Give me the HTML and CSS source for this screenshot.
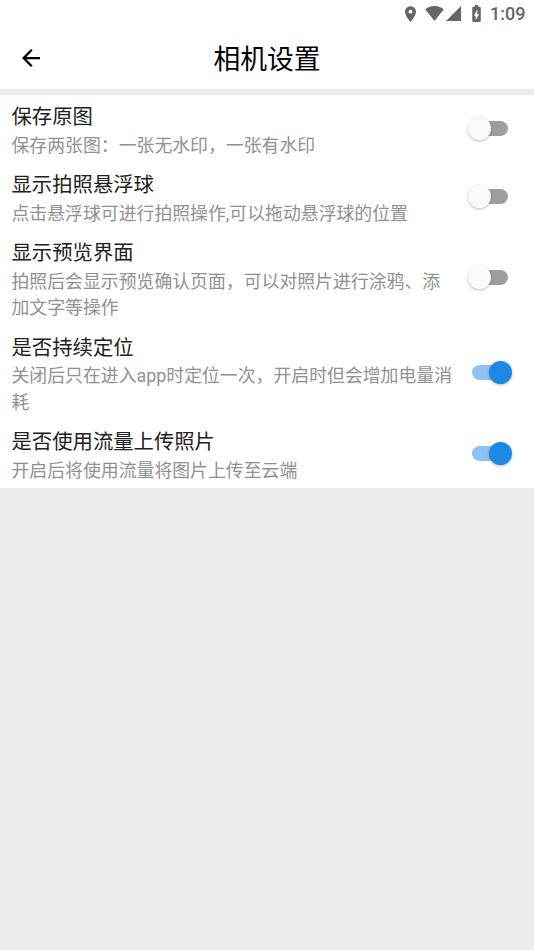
FILE: index.html
```html
<!DOCTYPE html>
<html lang="zh-CN">
<head>
<meta charset="utf-8">
<title>相机设置</title>
<link rel="stylesheet" href="styles.css">
</head>
<body>
<div class="status">
  <svg class="pin" viewBox="5 2 14 20"><path d="M12 2C8.13 2 5 5.13 5 9c0 5.25 7 13 7 13s7-7.75 7-13c0-3.87-3.13-7-7-7zm0 9.5a2.5 2.5 0 1 1 0-5 2.5 2.5 0 0 1 0 5z"/></svg>
  <svg class="wifi" viewBox="0 0 20 16"><path d="M0 3.5C6-1.200 14-1.200 20 3.500L10 16z"/></svg>
  <svg class="signal" viewBox="0 0 16 16"><path d="M16 0v16H0z"/></svg>
  <svg class="battery" viewBox="7 2 10 20"><path d="M15.670 4H14V2h-4v2H8.330C7.600 4 7 4.600 7 5.330v15.330C7 21.400 7.600 22 8.330 22h7.330c.740 0 1.340-.600 1.340-1.330V5.330C17 4.600 16.400 4 15.670 4zM11 20v-5.500H9L13 7v5.500h2L11 20z"/></svg>
  <span class="clock">1:09</span>
</div>
<header class="bar">
  <svg class="back" viewBox="4 4 16 16"><path d="M20 11H7.830l5.590-5.590L12 4l-8 8 8 8 1.410-1.410L7.830 13H20v-2z"/></svg>
  <h1>相机设置</h1>
</header>
<main class="list">
  <section class="row"><div class="text"><h2>保存原图</h2><p>保存两张图：一张无水印，一张有水印</p></div><span class="switch"></span></section>
  <section class="row"><div class="text"><h2>显示拍照悬浮球</h2><p>点击悬浮球可进行拍照操作,可以拖动悬浮球的位置</p></div><span class="switch"></span></section>
  <section class="row"><div class="text"><h2>显示预览界面</h2><p>拍照后会显示预览确认页面，可以对照片进行涂鸦、添加文字等操作</p></div><span class="switch"></span></section>
  <section class="row"><div class="text"><h2>是否持续定位</h2><p>关闭后只在进入app时定位一次，开启时但会增加电量消耗</p></div><span class="switch on"></span></section>
  <section class="row"><div class="text"><h2>是否使用流量上传照片</h2><p>开启后将使用流量将图片上传至云端</p></div><span class="switch on"></span></section>
</main>
</body>
</html>
```
FILE: styles.css
```css
* { box-sizing: border-box; margin: 0; padding: 0; }
body { background: #ebebeb; font-family: Roboto, "Noto Sans CJK SC", sans-serif; color: #212121; }
.status { display: flex; align-items: center; height: 27px; padding-left: 405px; background: #fff; color: #666; }
svg { display: block; flex: none; fill: currentColor; }
.pin { width: 11px; height: 16px; margin-right: 9px; }
.wifi { width: 19px; height: 15px; margin-right: 2px; }
.signal { width: 15px; height: 15px; margin-right: 10px; }
.battery { width: 11px; height: 17px; margin-right: 8px; }
.clock { font-size: 18px; font-weight: 500; line-height: 27px; }
.bar { display: grid; grid-template-columns: 62px 1fr 62px; align-items: center; height: 62px; background: #fff; color: #000; }
.back { width: 18px; height: 18px; margin-left: 22px; }
.bar h1 { padding-top: 3px; text-align: center; font-size: 26.8px; font-weight: 400; line-height: 40px; }
.list { margin-top: 5.500px; background: #fff; }
.row { display: flex; align-items: center; padding: 0 22px 0 11.500px; }
.text { width: 446px; padding: 7.500px 0 3.300px; }
.row h2 { font-size: 20.350px; font-weight: 400; line-height: 30px; }
.row p { padding-top: .600px; color: #909090; font-size: 17.880px; line-height: 26.600px; }
.switch { position: relative; flex: none; width: 36px; height: 15px; margin-left: 14.500px; border-radius: 8px; background: #9e9e9e; }
.switch::before { content: ""; position: absolute; top: -4px; left: -4px; width: 23px; height: 23px; border-radius: 50%; background: #fafafa; box-shadow: 0 1px 3px #0004; }
.on { background: #8dc2f2; }
.on::before { left: 17px; background: #1e88e5; }
```
